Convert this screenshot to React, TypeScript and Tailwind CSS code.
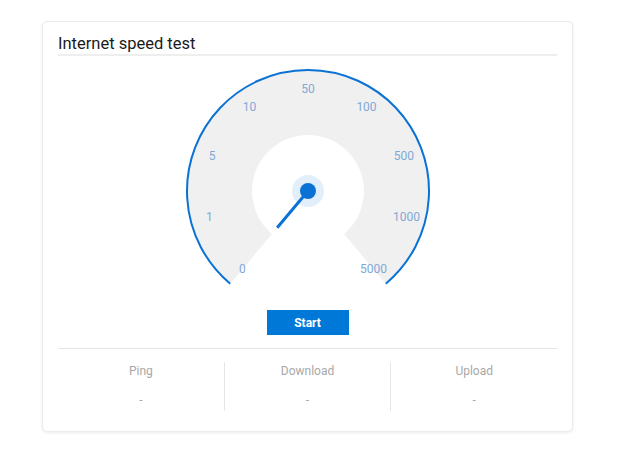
import React from "react";

const CX = 125;
const CY = 124;
const labels = ["0", "1", "5", "10", "50", "100", "500", "1000", "5000"];

function pt(r: number, deg: number) {
  const a = (deg * Math.PI) / 180;
  return { x: CX + r * Math.sin(a), y: CY - r * Math.cos(a) };
}

function Gauge() {
  const o1 = pt(121, -140);
  const o2 = pt(121, 140);
  const i1 = pt(56, -140);
  const i2 = pt(56, 140);
  const needle = pt(48, -140);
  const fill = `M ${o1.x} ${o1.y} A 121 121 0 1 1 ${o2.x} ${o2.y} L ${i2.x} ${i2.y} A 56 56 0 1 0 ${i1.x} ${i1.y} Z`;
  const arc = `M ${o1.x} ${o1.y} A 121 121 0 1 1 ${o2.x} ${o2.y}`;
  return (
    <svg width="250" height="222" viewBox="0 0 250 222">
      <path d={fill} fill="#f0f0f0" />
      <path d={arc} fill="none" stroke="#0a72d4" strokeWidth="2" />
      {labels.map((l, i) => {
        const p = pt(102, -140 + i * 35);
        return (
          <text
            key={l}
            x={p.x}
            y={p.y}
            textAnchor="middle"
            dominantBaseline="central"
            fontSize="12"
            fontFamily="Roboto, sans-serif"
            fill="#80a8d6"
          >
            {l}
          </text>
        );
      })}
      <circle cx={CX} cy={CY} r="16" fill="#e2effb" />
      <line x1={CX} y1={CY} x2={needle.x} y2={needle.y} stroke="#0a72d4" strokeWidth="3" />
      <circle cx={CX} cy={CY} r="8" fill="#0a72d4" />
    </svg>
  );
}

function Stat({ label, last }: { label: string; last?: boolean }) {
  return (
    <div className={`flex-1 flex flex-col items-center h-[49px] ${last ? "" : "border-r border-[#e6e6e6]"}`}>
      <div className="text-[12px] leading-[16px] text-[#a8a8a8] mt-[1px]">{label}</div>
      <div className="text-[12px] leading-[16px] text-[#a8a8a8] mt-[13px]">-</div>
    </div>
  );
}

export default function App() {
  return (
    <div className="w-[620px] h-[450px] bg-white pt-[21px] pl-[42px]" style={{ fontFamily: "Roboto, sans-serif" }}>
      <div className="w-[531px] h-[411px] bg-white border border-[#ebebeb] rounded-[5px] shadow-[0_1px_3px_rgba(0,0,0,0.08)] px-[15px] pt-[12px]">
        <div className="text-[16.5px] leading-[20px] text-[#1a1a1a] border-b-2 border-[#eeeeee]">
          Internet speed test
        </div>
        <div className="flex justify-center mt-[11px]">
          <Gauge />
        </div>
        <div className="flex justify-center mt-[21px]">
          <button className="w-[82px] h-[25px] bg-[#0078d7] text-white text-[12px] font-bold">Start</button>
        </div>
        <div className="mt-[13px] border-t border-[#e6e6e6] pt-[13px] flex">
          <Stat label="Ping" />
          <Stat label="Download" />
          <Stat label="Upload" last />
        </div>
      </div>
    </div>
  );
}
